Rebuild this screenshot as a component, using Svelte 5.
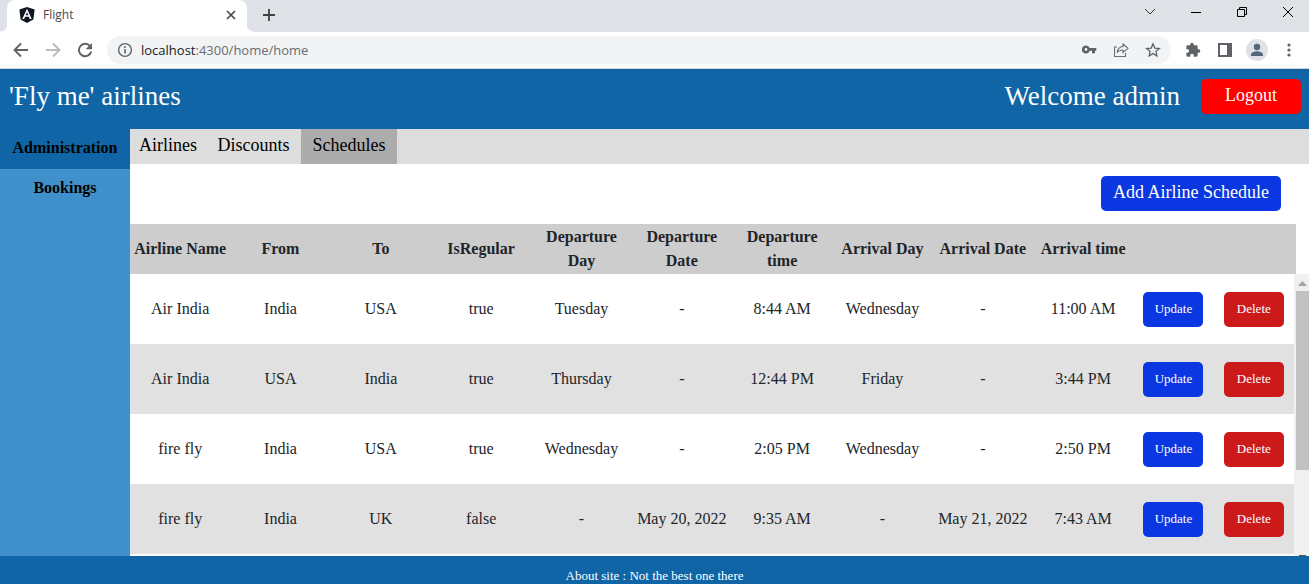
<script>
  const columns = ['Airline Name', 'From', 'To', 'IsRegular', 'Departure Day', 'Departure Date', 'Departure time', 'Arrival Day', 'Arrival Date', 'Arrival time'];
  const schedules = [
    ['Air India', 'India', 'USA', 'true', 'Tuesday', '-', '8:44 AM', 'Wednesday', '-', '11:00 AM'],
    ['Air India', 'USA', 'India', 'true', 'Thursday', '-', '12:44 PM', 'Friday', '-', '3:44 PM'],
    ['fire fly', 'India', 'USA', 'true', 'Wednesday', '-', '2:05 PM', 'Wednesday', '-', '2:50 PM'],
    ['fire fly', 'India', 'UK', 'false', '-', 'May 20, 2022', '9:35 AM', '-', 'May 21, 2022', '7:43 AM']
  ];
  let address = $state('localhost:4300/home/home');
</script>

<div class="window">
  <header class="chrome">
    <div class="tabstrip">
      <div class="tab">
        <svg width="16" height="16" viewBox="0 0 16 16"><path d="M8 0l7.6 2.6-1.2 10L8 16l-6.4-3.4-1.2-10z" fill="#10161f" /><path d="M8 1.8L3.3 12h1.9l.9-2.3h3.8l.9 2.3h1.9zm0 3.4l1.4 3.1H6.6z" fill="#fff" /></svg>
        <span class="title">Flight</span>
        <button class="icon" aria-label="Close tab"><svg width="10" height="10" viewBox="0 0 10 10"><path d="M1 1l8 8M9 1L1 9" stroke="#45484d" stroke-width="1.7" /></svg></button>
      </div>
      <button class="icon plus" aria-label="New tab"><svg width="12" height="12" viewBox="0 0 12 12"><path d="M6 0v12M0 6h12" stroke="#3c4043" stroke-width="1.8" /></svg></button>
      <div class="controls">
        <button class="icon" aria-label="Search tabs"><svg width="12" height="12" viewBox="0 0 12 12"><path d="M1 3l5 5 5-5" fill="none" stroke="#333" stroke-width="1" /></svg></button>
        <button class="icon" aria-label="Minimize"><svg width="10" height="10" viewBox="0 0 10 10"><path d="M0 5.5h10" stroke="#000" /></svg></button>
        <button class="icon" aria-label="Restore"><svg width="10" height="10" viewBox="0 0 10 10"><path d="M.5 2.5h7v7h-7zM2.5 2.5v-2h7v7h-2" fill="none" stroke="#000" /></svg></button>
        <button class="icon" aria-label="Close"><svg width="10" height="10" viewBox="0 0 10 10"><path d="M0 0l10 10M10 0L0 10" stroke="#000" /></svg></button>
      </div>
    </div>
    <div class="toolbar">
      <div class="nav">
        <button class="icon" aria-label="Back"><svg width="16" height="16" viewBox="0 0 16 16"><path d="M15 8H2M8 1.5L1.5 8 8 14.5" fill="none" stroke="#5f6368" stroke-width="1.9" /></svg></button>
        <button class="icon" aria-label="Forward"><svg width="16" height="16" viewBox="0 0 16 16"><path d="M1 8h13M8 1.5L14.5 8 8 14.5" fill="none" stroke="#babcbe" stroke-width="1.9" /></svg></button>
        <button class="icon" aria-label="Reload"><svg width="16" height="16" viewBox="0 0 16 16"><path d="M13.4 4.7A6.2 6.2 0 1 0 14.2 9.5" fill="none" stroke="#5f6368" stroke-width="2" /><path d="M15 1v6.3H8.7z" fill="#5f6368" /></svg></button>
      </div>
      <label class="address">
        <svg width="16" height="16" viewBox="0 0 16 16"><circle cx="8" cy="8" r="6.4" fill="none" stroke="#5f6368" stroke-width="1.4" /><path d="M8 7v4.5M8 4.3v1.6" stroke="#5f6368" stroke-width="1.6" /></svg>
        <span class="url"><span class="shown" aria-hidden="true">{address.split(':')[0]}<i>{address.slice(address.split(':')[0].length)}</i></span><input aria-label="Address" bind:value={address} /></span>
        <svg width="16" height="16" viewBox="0 0 16 16"><path d="M5 3.5a4 4 0 1 0 3.7 5.300H11v2.400h3V8.800h1.300V6H8.700A4 4 0 0 0 5 3.500zm0 2.600a1.400 1.400 0 1 1 0 2.800 1.400 1.400 0 0 1 0-2.800z" fill="#5f6368" /></svg>
        <svg width="16" height="16" viewBox="0 0 16 16"><path d="M4 5H1.5v9.500h11V11M10 2l5 4.300-5 4.200V8c-3 0-4.800.8-6 2.700C4.500 7 6.500 4.800 10 4.500z" fill="none" stroke="#6c7075" stroke-width="1.1" /></svg>
        <svg width="16" height="16" viewBox="0 0 16 16"><path d="M8 1.900l1.800 4.200 4.500.4-3.400 3 1 4.500L8 11.600 4.100 14l1-4.500-3.400-3 4.500-.4z" fill="none" stroke="#5f6368" stroke-width="1.3" /></svg>
      </label>
      <div class="tools">
        <button class="icon" aria-label="Extensions"><svg width="16" height="16" viewBox="0 0 24 24"><path d="M20.500 11H19V7c0-1.100-.9-2-2-2h-4V3.500a2.500 2.500 0 0 0-5 0V5H4c-1.100 0-2 .9-2 2v3.800h1.500a2.700 2.700 0 0 1 0 5.400H2V20c0 1.100.9 2 2 2h3.800v-1.500a2.700 2.700 0 0 1 5.400 0V22H17c1.100 0 2-.9 2-2v-4h1.500a2.500 2.500 0 0 0 0-5z" fill="#5f6368" /></svg></button>
        <button class="icon" aria-label="Side panel"><svg width="16" height="16" viewBox="0 0 16 16"><path d="M1 1h14v14H1zM3 3v10h7V3z" fill="#5f6368" fill-rule="evenodd" /></svg></button>
        <button class="icon" aria-label="Profile"><svg width="22" height="22" viewBox="0 0 22 22"><circle cx="11" cy="11" r="11" fill="#dee1e6" /><circle cx="11" cy="8" r="3.2" fill="#56657a" /><path d="M5 17v-1.600c0-2 4-3.100 6-3.100s6 1.100 6 3.100V17z" fill="#56657a" /></svg></button>
        <button class="icon" aria-label="Menu"><svg width="16" height="16" viewBox="0 0 16 16" fill="#5f6368"><circle cx="8" cy="3" r="1.6" /><circle cx="8" cy="8" r="1.6" /><circle cx="8" cy="13" r="1.6" /></svg></button>
      </div>
    </div>
  </header>

  <div class="banner">
    <span>'Fly me' airlines</span>
    <div class="user"><span>Welcome admin</span><button class="logout">Logout</button></div>
  </div>

  <div class="body">
    <nav class="side">
      <a class="active" href="#admin">Administration</a>
      <a href="#bookings">Bookings</a>
    </nav>
    <main>
      <nav class="tabs">
        <a href="#airlines">Airlines</a>
        <a href="#discounts">Discounts</a>
        <a class="active" href="#schedules">Schedules</a>
      </nav>
      <div class="actions"><button class="add">Add Airline Schedule</button></div>
      <div class="list">
        <table>
          <colgroup>{#each columns as c}<col class="data" />{/each}<col /><col /></colgroup>
          <thead>
            <tr>{#each columns as c}<th>{c}</th>{/each}<td></td><td></td></tr>
          </thead>
          <tbody>
            {#each schedules as row}
              <tr>
                {#each row as cell}<td>{cell}</td>{/each}
                <td><button class="row-btn">Update</button></td>
                <td><button class="row-btn delete">Delete</button></td>
              </tr>
            {/each}
          </tbody>
        </table>
        <div class="scroll" aria-hidden="true">
          <svg width="9" height="5" viewBox="0 0 9 5"><path d="M4.500 0L9 5H0z" fill="#a3a3a3" /></svg>
          <div class="thumb"></div>
          <div class="down"></div>
        </div>
      </div>
    </main>
  </div>
  <footer>About site : Not the best one there</footer>
</div>

<style>
  :global(body) { margin: 0; }
  * { box-sizing: border-box; }
  button { font: inherit; border: 0; padding: 0; cursor: pointer; }
  a { color: inherit; text-decoration: none; }
  svg { display: block; flex: none; }
  .window { height: 100vh; display: flex; flex-direction: column; overflow: hidden; background: #fff; font-family: "Liberation Serif", "Times New Roman", serif; font-size: 16px; line-height: 24px; color: #212529; }
  .chrome { flex: none; font-family: "Open Sans", "Noto Sans", sans-serif; border-bottom: 1px solid #d0d3d7; }
  .icon { background: none; display: grid; place-items: center; }
  .tabstrip { height: 32px; background: #dee1e6; display: flex; align-items: flex-start; padding-left: 7px; }
  .tab { position: relative; width: 240px; height: 32px; padding: 0 11px 2px 12px; background: #fff; display: flex; align-items: center; gap: 8px; font-size: 12px; color: #45494d; border-radius: 8px 8px 0 0; }
  .tab::before, .tab::after { content: ""; position: absolute; bottom: 0; width: 7px; height: 8px; }
  .tab::before { right: 100%; background: radial-gradient(circle at 0 0, transparent 7px, #fff 8px); }
  .tab::after { left: 100%; background: radial-gradient(circle at 100% 0, transparent 7px, #fff 8px); }
  .title { flex: 1; }
  .plus { height: 30px; margin-left: 16px; }
  .controls { margin-left: auto; margin-right: -2px; height: 24px; display: grid; grid-template-columns: repeat(4, 46px); }
  .toolbar { height: 36px; background: #fff; display: flex; align-items: center; gap: 14px; padding: 0 12px 0 13px; }
  .nav { display: flex; gap: 16px; }
  .address { flex: 1; height: 28px; border-radius: 14px; background: #f1f3f4; display: flex; align-items: center; gap: 16px; padding: 0 10px; }
  .url { position: relative; flex: 1; margin-left: -8px; font-size: 13px; color: #202124; }
  .shown i { font-style: normal; color: #686c71; }
  .url input { position: absolute; inset: 0; width: 100%; border: 0; padding: 0; background: none; font: inherit; color: transparent; caret-color: #202124; outline: 0; }
  .tools { display: flex; align-items: center; gap: 16px; }
  .tools .icon:nth-child(3) { margin: 0 -3px; }
  .banner { flex: none; height: 60px; background: #0f65a5; color: #fff; font-size: 27px; display: flex; align-items: flex-start; justify-content: space-between; padding: 10px 8px 0 9px; line-height: 34px; }
  .user { display: flex; gap: 21px; }
  .logout, .add { color: #fff; border-radius: 5px; height: 35px; font-size: 18px; line-height: 24px; padding-bottom: 3px; }
  .logout { background: #f00; width: 100px; }
  .body { flex: 1; min-height: 0; display: flex; }
  .side { width: 130px; background: #4090cb; color: #000; font-size: 16px; font-weight: bold; text-align: center; }
  .side a { display: block; line-height: 38px; height: 40px; }
  .side .active { background: #0f65a5; }
  main { flex: 1; min-width: 0; display: flex; flex-direction: column; }
  .tabs { flex: none; background: #ddd; color: #000; display: grid; grid-template-columns: 76px 95px 96px; font-size: 18px; line-height: 33px; height: 35px; text-align: center; }
  .tabs .active { background: #acacac; }
  .actions { flex: none; height: 60px; padding: 12px 28px 0 0; display: flex; justify-content: flex-end; align-items: flex-start; }
  .add { background: #0a37e1; width: 180px; }
  .list { position: relative; flex: 1; min-height: 0; overflow: hidden; padding-right: 15px; }
  table { width: 100%; border-collapse: collapse; table-layout: fixed; text-align: center; }
  col.data { width: 8.62%; }
  th, td { padding: 0; }
  thead tr { background: #cdcdcd; height: 50px; box-shadow: 2px 0 #cdcdcd; }
  tbody tr { height: 70px; }
  tbody tr:nth-child(even) { background: #e1e1e1; }
  .row-btn { width: 60px; height: 35px; border-radius: 5px; background: #0a37e1; color: #fff; font-size: 13px; vertical-align: middle; }
  .row-btn.delete { background: #cc1a1a; }
  .scroll { position: absolute; top: 50px; right: 0; bottom: 0; width: 15px; background: #f0f0f0; padding: 7px 0 0 2px; display: flex; flex-direction: column; align-items: center; gap: 5px; }
  .thumb { width: 100%; height: 179px; background: #c1c1c1; }
  .down { width: 7px; height: 1px; margin-top: auto; background: #505050; }
  footer { flex: none; height: 28px; padding-top: 8px; background: #0f65a5; color: #fff; text-align: center; font-size: 13px; }
</style>
